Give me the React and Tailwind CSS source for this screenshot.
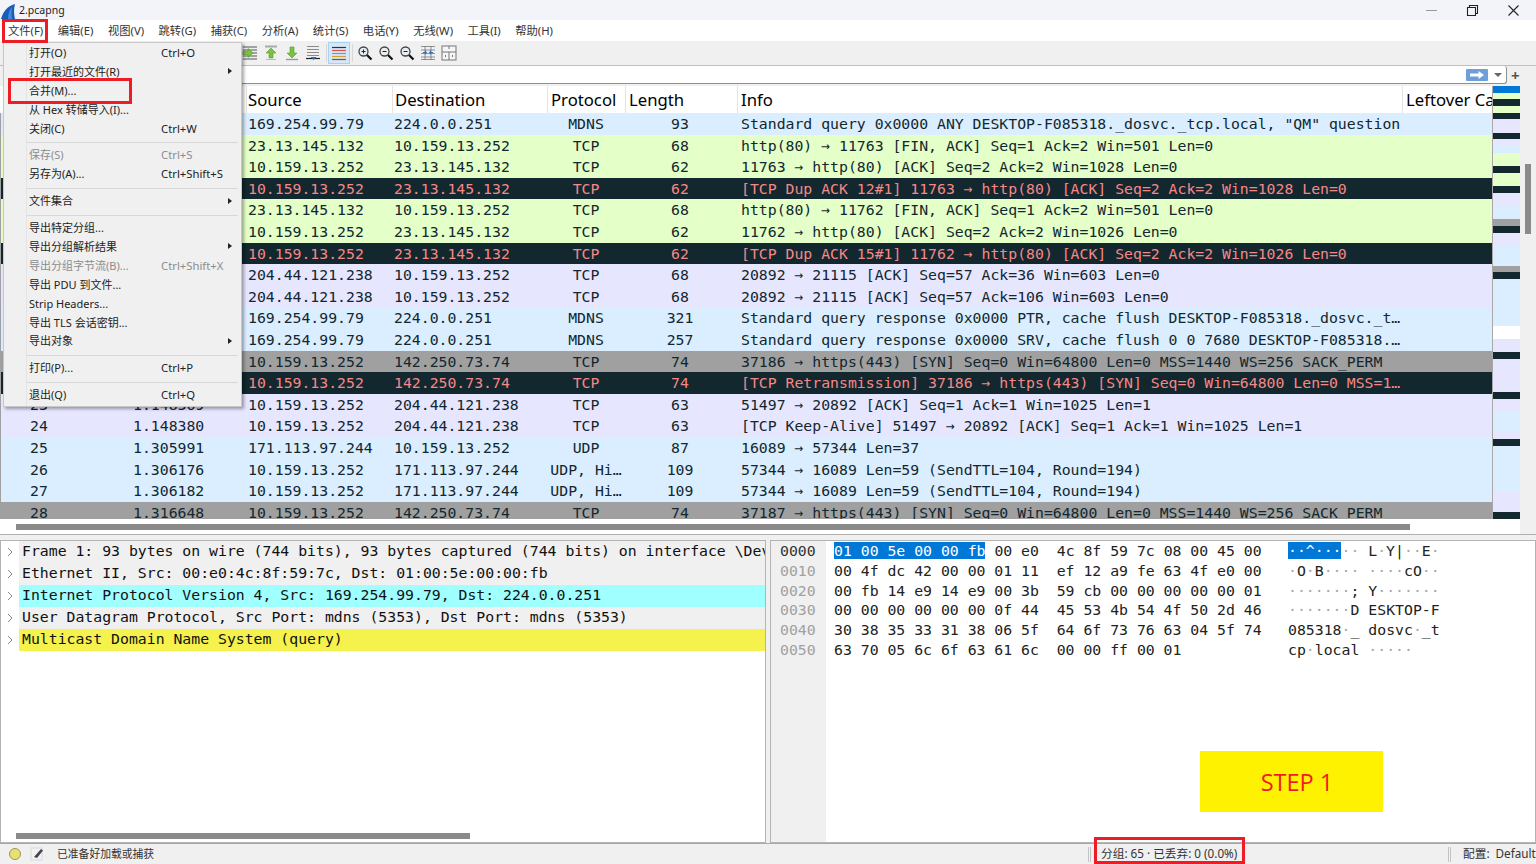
import React from "react";

const CJK = "font-['Noto_Sans','Noto_Sans_CJK_SC',sans-serif]";
const MONO = "font-['DejaVu_Sans_Mono','Noto_Sans_CJK_SC',monospace]";

const S = {
  blue: "bg-[#daeeff] text-[#12272e]",
  green: "bg-[#e4ffc7] text-[#12272e]",
  dark: "bg-[#12272e] text-[#f78787]",
  purple: "bg-[#e7e6ff] text-[#12272e]",
  gray: "bg-[#a0a0a0] text-[#12272e]",
};

const rows = [
  ["blue", "10", "0.102311", "169.254.99.79", "224.0.0.251", "MDNS", "93", 'Standard query 0x0000 ANY DESKTOP-F085318._dosvc._tcp.local, "QM" question'],
  ["green", "11", "0.389120", "23.13.145.132", "10.159.13.252", "TCP", "68", "http(80) → 11763 [FIN, ACK] Seq=1 Ack=2 Win=501 Len=0"],
  ["green", "12", "0.389231", "10.159.13.252", "23.13.145.132", "TCP", "62", "11763 → http(80) [ACK] Seq=2 Ack=2 Win=1028 Len=0"],
  ["dark", "13", "0.389402", "10.159.13.252", "23.13.145.132", "TCP", "62", "[TCP Dup ACK 12#1] 11763 → http(80) [ACK] Seq=2 Ack=2 Win=1028 Len=0"],
  ["green", "14", "0.401120", "23.13.145.132", "10.159.13.252", "TCP", "68", "http(80) → 11762 [FIN, ACK] Seq=1 Ack=2 Win=501 Len=0"],
  ["green", "15", "0.401233", "10.159.13.252", "23.13.145.132", "TCP", "62", "11762 → http(80) [ACK] Seq=2 Ack=2 Win=1026 Len=0"],
  ["dark", "16", "0.401391", "10.159.13.252", "23.13.145.132", "TCP", "62", "[TCP Dup ACK 15#1] 11762 → http(80) [ACK] Seq=2 Ack=2 Win=1026 Len=0"],
  ["purple", "17", "0.612207", "204.44.121.238", "10.159.13.252", "TCP", "68", "20892 → 21115 [ACK] Seq=57 Ack=36 Win=603 Len=0"],
  ["purple", "18", "0.612391", "204.44.121.238", "10.159.13.252", "TCP", "68", "20892 → 21115 [ACK] Seq=57 Ack=106 Win=603 Len=0"],
  ["blue", "19", "0.802113", "169.254.99.79", "224.0.0.251", "MDNS", "321", "Standard query response 0x0000 PTR, cache flush DESKTOP-F085318._dosvc._t…"],
  ["blue", "20", "0.802245", "169.254.99.79", "224.0.0.251", "MDNS", "257", "Standard query response 0x0000 SRV, cache flush 0 0 7680 DESKTOP-F085318.…"],
  ["gray", "21", "0.953310", "10.159.13.252", "142.250.73.74", "TCP", "74", "37186 → https(443) [SYN] Seq=0 Win=64800 Len=0 MSS=1440 WS=256 SACK_PERM"],
  ["dark", "22", "0.953402", "10.159.13.252", "142.250.73.74", "TCP", "74", "[TCP Retransmission] 37186 → https(443) [SYN] Seq=0 Win=64800 Len=0 MSS=1…"],
  ["purple", "23", "1.148369", "10.159.13.252", "204.44.121.238", "TCP", "63", "51497 → 20892 [ACK] Seq=1 Ack=1 Win=1025 Len=1"],
  ["purple", "24", "1.148380", "10.159.13.252", "204.44.121.238", "TCP", "63", "[TCP Keep-Alive] 51497 → 20892 [ACK] Seq=1 Ack=1 Win=1025 Len=1"],
  ["blue", "25", "1.305991", "171.113.97.244", "10.159.13.252", "UDP", "87", "16089 → 57344 Len=37"],
  ["blue", "26", "1.306176", "10.159.13.252", "171.113.97.244", "UDP, Hi…", "109", "57344 → 16089 Len=59 (SendTTL=104, Round=194)"],
  ["blue", "27", "1.306182", "10.159.13.252", "171.113.97.244", "UDP, Hi…", "109", "57344 → 16089 Len=59 (SendTTL=104, Round=194)"],
  ["gray", "28", "1.316648", "10.159.13.252", "142.250.73.74", "TCP", "74", "37187 → https(443) [SYN] Seq=0 Win=64800 Len=0 MSS=1440 WS=256 SACK_PERM"],
];

const minimap = [
  ["#0078d7", 1], ["#e4ffc7", 1], ["#12272e", 1], ["#e4ffc7", 1], ["#12272e", 1], ["#e7e6ff", 2], ["#12272e", 1],
  ["#e7e6ff", 1], ["#daeeff", 1], ["#e4ffc7", 2], ["#12272e", 1], ["#e4ffc7", 2], ["#12272e", 1], ["#e7e6ff", 2],
  ["#daeeff", 2], ["#a0a0a0", 1], ["#12272e", 1], ["#e7e6ff", 2], ["#daeeff", 3], ["#a0a0a0", 1], ["#12272e", 1],
  ["#daeeff", 7], ["#ffffff", 2], ["#e7e6ff", 2], ["#12272e", 1], ["#e7e6ff", 5], ["#12272e", 1], ["#e7e6ff", 2],
  ["#daeeff", 3], ["#e7e6ff", 1], ["#12272e", 1], ["#daeeff", 7], ["#e7e6ff", 3], ["#12272e", 1],
];

const menus = ["文件(F)", "编辑(E)", "视图(V)", "跳转(G)", "捕获(C)", "分析(A)", "统计(S)", "电话(Y)", "无线(W)", "工具(I)", "帮助(H)"];

const fileMenu = [
  ["打开(O)", "Ctrl+O"],
  ["打开最近的文件(R)", "", false, true],
  ["合并(M)..."],
  ["从 Hex 转储导入(I)..."],
  ["关闭(C)", "Ctrl+W"],
  "sep",
  ["保存(S)", "Ctrl+S", true],
  ["另存为(A)...", "Ctrl+Shift+S"],
  "sep",
  ["文件集合", "", false, true],
  "sep",
  ["导出特定分组..."],
  ["导出分组解析结果", "", false, true],
  ["导出分组字节流(B)...", "Ctrl+Shift+X", true],
  ["导出 PDU 到文件..."],
  ["Strip Headers..."],
  ["导出 TLS 会话密钥..."],
  ["导出对象", "", false, true],
  "sep",
  ["打印(P)...", "Ctrl+P"],
  "sep",
  ["退出(Q)", "Ctrl+Q"],
];

const tree = [
  ["Frame 1: 93 bytes on wire (744 bits), 93 bytes captured (744 bits) on interface \\Device\\NPF_{8A2C1F04}, id 0", "bg-[#f0f0f0]"],
  ["Ethernet II, Src: 00:e0:4c:8f:59:7c, Dst: 01:00:5e:00:00:fb", "bg-[#f0f0f0]"],
  ["Internet Protocol Version 4, Src: 169.254.99.79, Dst: 224.0.0.251", "bg-[#a0ffff]"],
  ["User Datagram Protocol, Src Port: mdns (5353), Dst Port: mdns (5353)", "bg-[#f0f0f0]"],
  ["Multicast Domain Name System (query)", "bg-[#f5f24d]"],
];

const hex = [
  ["0000", "00 e0  4c 8f 59 7c 08 00 45 00", "·· L·Y|··E·"],
  ["0010", "00 4f dc 42 00 00 01 11  ef 12 a9 fe 63 4f e0 00", "·O·B···· ····cO··"],
  ["0020", "00 fb 14 e9 14 e9 00 3b  59 cb 00 00 00 00 00 01", "·······; Y·······"],
  ["0030", "00 00 00 00 00 00 0f 44  45 53 4b 54 4f 50 2d 46", "·······D ESKTOP-F"],
  ["0040", "30 38 35 33 31 38 06 5f  64 6f 73 76 63 04 5f 74", "085318·_ dosvc·_t"],
  ["0050", "63 70 05 6c 6f 63 61 6c  00 00 ff 00 01", "cp·local ·····"],
];

function Ascii({ text }) {
  return (
    <>
      {text.split("").map((c, i) =>
        c === "·" ? <span key={i} className="text-[#a8a8a8]">·</span> : <span key={i}>{c}</span>
      )}
    </>
  );
}

function ToolIcon({ children, active }) {
  return (
    <span className={`flex h-[20px] w-[20px] shrink-0 items-center justify-center ${active ? "bg-[#d5e8f8] outline outline-1 outline-[#a8d2f2]" : ""}`}>
      <svg width="16" height="16" viewBox="0 0 16 16">{children}</svg>
    </span>
  );
}

const Lines = () => <path d="M1 2h14M1 5h14M1 8h14M1 11h14" stroke="#555" strokeWidth="1" />;

const Magnifier = ({ sign }) => (
  <>
    <circle cx="6.500" cy="6.500" r="4.500" fill="#e8eef2" stroke="#444" strokeWidth="1.300" />
    <path d="M10 10l4.500 4.500" stroke="#111" strokeWidth="2.200" />
    <path d={sign === "+" ? "M4.500 6.500h4M6.500 4.500v4" : "M4.500 6.500h4"} stroke="#222" strokeWidth="1" />
  </>
);

function Toolbar() {
  return (
    <div className="flex h-[24px] items-center gap-px bg-[#f0f0f0] pl-[240px]">
      <ToolIcon>
        <Lines />
        <path d="M1 14h14" stroke="#555" />
        <path d="M1 6.500h5V3.500l5 4.500-5 4.500V9.500H1z" fill="#7fc241" stroke="#4a9a1f" strokeWidth=".6" />
      </ToolIcon>
      <ToolIcon>
        <path d="M2 1.500h12" stroke="#aaa" strokeWidth="2" />
        <path d="M8 3l5 5h-3v5H6V8H3z" fill="#79c143" stroke="#5a9f2f" strokeWidth=".6" />
        <path d="M3 14.500h10" stroke="#bbb" />
      </ToolIcon>
      <ToolIcon>
        <path d="M8 13l5-5h-3V2H6v6H3z" fill="#79c143" stroke="#5a9f2f" strokeWidth=".6" />
        <path d="M2 14.500h12" stroke="#999" strokeWidth="1.400" />
      </ToolIcon>
      <ToolIcon>
        <path d="M2 1.500h12M2 4.500h12M2 7.500h12M2 10.500h12" stroke="#8a8a8a" />
        <path d="M1 13.500h14" stroke="#222" strokeWidth="1.200" />
        <path d="M5.500 12h6L8.500 15z" fill="#2a6fc0" />
      </ToolIcon>
      <span className="mx-[1.500px] h-[18px] w-px bg-[#d8d8d8]" />
      <ToolIcon active>
        <path d="M1 2.500h14" stroke="#333" strokeWidth="1.200" />
        <path d="M1 5.500h14" stroke="#d9534f" strokeWidth="1.200" />
        <path d="M1 8.500h14" stroke="#7a8fd0" strokeWidth="1.200" />
        <path d="M1 11.500h14" stroke="#d0a030" strokeWidth="1.200" />
        <path d="M1 14.500h14" stroke="#a04040" strokeWidth="1.200" />
      </ToolIcon>
      <span className="mx-[1.500px] h-[18px] w-px bg-[#d8d8d8]" />
      <ToolIcon><Magnifier sign="+" /></ToolIcon>
      <ToolIcon><Magnifier sign="-" /></ToolIcon>
      <ToolIcon><Magnifier sign="=" /></ToolIcon>
      <ToolIcon>
        <path d="M1 1.500h14M1 5h14M1 8.500h14M1 12h14M1 14.500h14" stroke="#777" strokeWidth=".8" />
        <path d="M5 1v14M11 1v14" stroke="#777" strokeWidth=".8" />
        <path d="M3 7h2V5l2 2.500L5 10V8H3zM13 7h-2V5L9 7.500l2 2.500V8h2z" fill="#2a6fc0" />
      </ToolIcon>
      <ToolIcon>
        <rect x="1" y="1" width="14" height="14" fill="#f6f6f6" stroke="#777" />
        <path d="M1 7h14M8 7v8M8 1v3" stroke="#777" />
        <path d="M4 10h1v2H4zM11 10h1v2h-1z" fill="#777" />
      </ToolIcon>
    </div>
  );
}

function FilterBar() {
  return (
    <div className="flex h-[21px] items-start border-t border-[#c0c0c0] bg-[#f0f0f0]">
      <div className="ml-[240px] flex h-[18px] w-[1267px] items-center justify-end rounded-r-[3px] border border-t-0 border-[#8f8f8f] bg-white pr-[3px]">
        <span className="flex h-[12px] w-[22px] items-center justify-center rounded-[1px] bg-[#6f9fd8]">
          <svg width="16" height="10" viewBox="0 0 16 10"><path d="M1 3.500h8.500V1L15 5l-5.500 4V6.500H1z" fill="#fff" /></svg>
        </span>
        <span className="mr-[1px] ml-[6px] h-0 w-0 border-x-[4px] border-t-[4px] border-x-transparent border-t-[#666]" />
      </div>
      <span className="mt-[1px] ml-[4px] text-[15px] leading-[16px] font-bold text-[#555]">+</span>
    </div>
  );
}

const cols = "grid grid-cols-[131px_115px_146px_155px_78px_112px_665px_90px]";

function PacketList() {
  return (
    <div className="flex h-[448px] shrink-0 bg-white">
      <div className="flex w-[1492px] shrink-0 flex-col overflow-hidden">
        <div className={`${cols} h-[27px] shrink-0 pl-px text-[16.7px] leading-[27px] whitespace-nowrap text-black ${CJK}`}>
          <span className="border-r border-[#e4e4e4]" />
          <span className="border-r border-[#e4e4e4]" />
          <span className="border-r border-[#e4e4e4] pl-[1px]">Source</span>
          <span className="border-r border-[#e4e4e4] pl-[2px]">Destination</span>
          <span className="border-r border-[#e4e4e4] pl-[3px]">Protocol</span>
          <span className="border-r border-[#e4e4e4] pl-[3px]">Length</span>
          <span className="border-r border-[#e4e4e4] pl-[3px]">Info</span>
          <span className="pl-[3px]">Leftover Capture Data</span>
        </div>
        <div className={`h-[406px] shrink-0 overflow-hidden border-l border-[#a0a0a0] text-[14.8px] ${MONO}`}>
          {rows.map((r) => (
            <div key={r[1]} className={`${cols} h-[21.6px] leading-[21px] whitespace-nowrap ${S[r[0]]}`}>
              <span className="pl-[29px]">{r[1]}</span>
              <span className="pl-[1px]">{r[2]}</span>
              <span className="pl-[1px]">{r[3]}</span>
              <span className="pl-[1px]">{r[4]}</span>
              <span className="overflow-hidden pr-[2px] text-center">{r[5]}</span>
              <span className="pr-[4px] text-center">{r[6]}</span>
              <span className="overflow-hidden pl-[3px]">{r[7]}</span>
              <span />
            </div>
          ))}
        </div>
        <div className="h-[15px] shrink-0 bg-white pt-[5px] pl-[16px]">
          <div className="h-[6px] w-[1394px] bg-[#8a8a8a]" />
        </div>
      </div>
      <div className="flex h-[433px] w-[28px] shrink-0 flex-col border-l border-[#a8a8a8]">
        {minimap.map(([c, n], i) => (
          <div key={i} style={{ backgroundColor: c, flexGrow: n, flexBasis: 0 }} />
        ))}
      </div>
      <div className="flex-1 bg-[#f0f0f0]">
        <div className="mx-auto mt-[78px] h-[70px] w-[6px] bg-[#8a8a8a]" />
      </div>
    </div>
  );
}

function DetailPane() {
  return (
    <div className="flex w-[766px] shrink-0 flex-col overflow-hidden border border-[#b4b4b4] bg-white">
      <div className={`flex-1 overflow-hidden text-[14.8px] text-[#111] ${MONO}`}>
        {tree.map(([t, bg], i) => (
          <div key={i} className="flex h-[22px] items-center whitespace-nowrap">
            <span className="flex w-[18px] shrink-0 justify-center">
              <svg width="8" height="10" viewBox="0 0 8 10"><path d="M2 1l4 4-4 4" fill="none" stroke="#8a8a8a" /></svg>
            </span>
            <span className={`h-[22px] flex-1 overflow-hidden pl-[3px] leading-[20px] ${bg}`}>{t}</span>
          </div>
        ))}
      </div>
      <div className="flex h-[9px] shrink-0 items-start pl-[15px]">
        <div className="h-[6px] w-[454px] bg-[#8a8a8a]" />
      </div>
    </div>
  );
}

function HexPane() {
  return (
    <div className="ml-[4px] flex flex-1 border border-[#b4b4b4] bg-white">
      <div className={`w-[55px] shrink-0 bg-[#f0f0f0] pl-[9px] text-[14.8px] leading-[19.8px] ${MONO}`}>
        {hex.map((h, i) => (
          <div key={h[0]} className={i === 0 ? "text-[#333]" : "text-[#a0a0a0]"}>{h[0]}</div>
        ))}
      </div>
      <div className={`flex-1 pl-[8px] text-[14.8px] leading-[19.8px] whitespace-pre text-[#222] ${MONO}`}>
        {hex.map((h, i) => (
          <div key={h[0]} className="flex">
            <span className="w-[454px] shrink-0">
              {i === 0 && <span className="bg-[#0078d7] text-white">01 00 5e 00 00 fb</span>}
              {i === 0 && " "}
              {h[1]}
            </span>
            <span>
              {i === 0 && <span className="bg-[#0078d7] text-white">··^···</span>}
              <Ascii text={h[2]} />
            </span>
          </div>
        ))}
      </div>
    </div>
  );
}

function FileMenu() {
  return (
    <div className={`absolute top-[42px] left-[3px] w-[239px] border border-[#c8c8c8] bg-[#f0f0f0] py-[1px] text-[11.3px] text-[#222] shadow-[2px_2px_3px_rgba(0,0,0,0.35)] ${CJK}`}>
      <div className="absolute top-0 bottom-0 left-[22px] w-px bg-[#e4e4e4]" />
      {fileMenu.map((m, i) =>
        m === "sep" ? (
          <div key={i} className="my-[3px] mr-[3px] ml-[23px] h-[2px] border-b border-[#d8d8d8]" />
        ) : (
          <div key={i} className={`relative flex h-[18.9px] items-center pb-[2px] pl-[25px] whitespace-nowrap ${m[2] ? "text-[#8c8c8c]" : ""}`}>
            <span className="w-[132px] text-[11px] leading-[17px]">{m[0]}</span>
            <span className="leading-[17px]">{m[1]}</span>
            {m[3] && <span className="absolute right-[9px] h-0 w-0 border-y-[3.500px] border-l-[4px] border-y-transparent border-l-[#222]" />}
          </div>
        )
      )}
    </div>
  );
}

function Logo() {
  return (
    <svg width="14" height="15" viewBox="0 0 14 15" className="mt-[2px] mr-[4px] shrink-0">
      <path d="M0 15C2 8 6 2 14 0c-1.500 5-1 11 0 15z" fill="#1a5db5" />
      <path d="M7 15c0-4 1-9 4-12-.500 4-.500 9 0 12z" fill="#3f8ae0" />
    </svg>
  );
}

export default function App() {
  return (
    <div className="relative flex h-[864px] w-[1536px] flex-col overflow-hidden bg-[#f0f0f0]">
      <div className={`flex h-[20px] items-center bg-[#f2f4fa] pl-[1px] text-[10.5px] text-[#222] ${CJK}`}>
        <Logo />
        <span className="flex-1 pt-px">2.pcapng</span>
        <div className="flex items-center gap-[28px] pr-[16px]">
          <svg width="13" height="13" viewBox="0 0 13 13"><path d="M1 6.500h11" stroke="#999" /></svg>
          <svg width="13" height="13" viewBox="0 0 13 13"><path d="M3.500 3.500V1.500h8v8h-2M1.500 3.500h8v8h-8z" fill="none" stroke="#222" strokeWidth="1.100" /></svg>
          <svg width="13" height="13" viewBox="0 0 13 13"><path d="M1.500 1.500l10 10M11.500 1.500l-10 10" stroke="#222" strokeWidth="1.100" /></svg>
        </div>
      </div>
      <div className={`flex h-[21px] items-center gap-[14.500px] bg-white pt-[2px] pl-[8px] text-[11.3px] text-[#333] ${CJK}`}>
        {menus.map((m) => <span key={m}>{m}</span>)}
      </div>
      <Toolbar />
      <FilterBar />
      <PacketList />
      <div className="h-[6px] shrink-0 border-t border-[#b0b0b0] bg-[#f0f0f0]" />
      <div className="flex h-[303px] shrink-0 bg-[#f0f0f0]">
        <DetailPane />
        <HexPane />
      </div>
      <div className={`flex flex-1 items-center border-t border-[#a8a8a8] bg-[#f0f0f0] text-[11.7px] text-[#333] ${CJK}`}>
        <span className="ml-[9px] h-[12px] w-[12px] shrink-0 rounded-full border border-[#9a9a50] bg-[#e8e070]" />
        <svg width="14" height="14" viewBox="0 0 14 14" className="ml-[9px] shrink-0">
          <rect x="1" y="1" width="11" height="12" fill="#f2f2f2" stroke="#d8d8d8" />
          <path d="M4 10l7-8 2 1.500-6 7.500z" fill="#445" />
        </svg>
        <span className="ml-[13px] w-[1031px] shrink-0 text-[10.8px]">已准备好加载或捕获</span>
        <span className="h-[15px] w-[3px] shrink-0 border-x border-[#c4c4c4]" />
        <span className="ml-[10px] w-[347px] shrink-0">分组: 65 · 已丢弃: 0 (0.0%)</span>
        <span className="h-[15px] w-[3px] shrink-0 border-x border-[#c4c4c4]" />
        <span className="ml-[12px]">配置:&nbsp; Default</span>
      </div>

      <FileMenu />

      <div className="absolute top-[19px] left-[2px] h-[24px] w-[46px] border-[3px] border-[#ee1c25]" />
      <div className="absolute top-[78px] left-[8px] h-[26px] w-[124px] border-[3px] border-[#ee1c25]" />
      <div className="absolute top-[837px] left-[1094px] h-[27px] w-[151px] border-[3px] border-[#ee1c25]" />
      <div className="absolute top-[751px] left-[1200px] flex h-[61px] w-[183px] items-center justify-center bg-[#fff200] pt-[2px] pl-[11px] font-['Open_Sans',sans-serif] text-[23.500px] text-[#ee1c25]">
        STEP 1
      </div>
    </div>
  );
}
